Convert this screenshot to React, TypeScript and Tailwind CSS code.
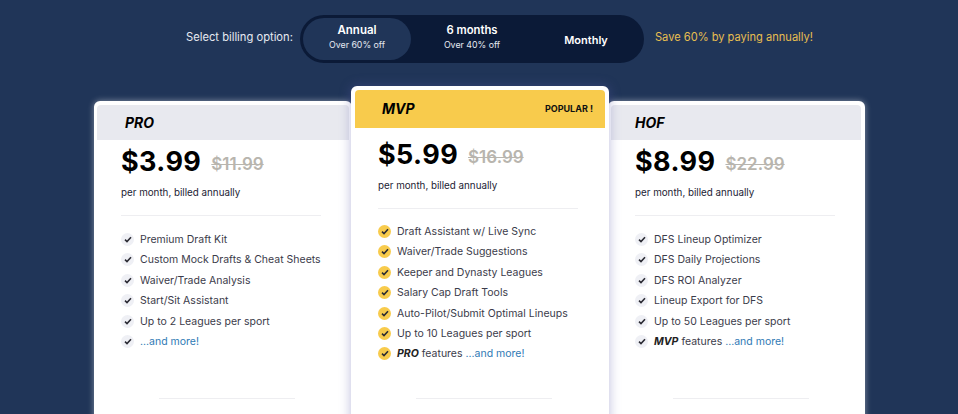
import React from "react";

const Check = ({ popular }: { popular?: boolean }) => (
  <span className={`flex h-[13px] w-[13px] shrink-0 items-center justify-center rounded-full ${popular ? "bg-[#f8cb4c]" : "bg-[#eff0f5]"}`}>
    <svg width="8" height="7" viewBox="0 0 8 7" fill="none">
      <path d="M1 3.6 L3 5.5 L7 1.3" stroke="#2a2a33" strokeWidth="1.6" />
    </svg>
  </span>
);

const More = () => <span className="text-[#2f7ab5]">...and more!</span>;

type Plan = {
  name: string;
  price: string;
  old: string;
  features: React.ReactNode[];
  popular?: boolean;
  last?: boolean;
};

const plans: Plan[] = [
  {
    name: "PRO",
    price: "$3.99",
    old: "$11.99",
    features: ["Premium Draft Kit", "Custom Mock Drafts & Cheat Sheets", "Waiver/Trade Analysis", "Start/Sit Assistant", "Up to 2 Leagues per sport", <More />],
  },
  {
    name: "MVP",
    price: "$5.99",
    old: "$16.99",
    popular: true,
    features: [
      "Draft Assistant w/ Live Sync",
      "Waiver/Trade Suggestions",
      "Keeper and Dynasty Leagues",
      "Salary Cap Draft Tools",
      "Auto-Pilot/Submit Optimal Lineups",
      "Up to 10 Leagues per sport",
      <><b className="font-bold italic text-[#222]">PRO</b> features <More /></>,
    ],
  },
  {
    name: "HOF",
    price: "$8.99",
    old: "$22.99",
    last: true,
    features: [
      "DFS Lineup Optimizer",
      "DFS Daily Projections",
      "DFS ROI Analyzer",
      "Lineup Export for DFS",
      "Up to 50 Leagues per sport",
      <><b className="font-bold italic text-[#222]">MVP</b> features <More /></>,
    ],
  },
];

function Card({ plan }: { plan: Plan }) {
  const p = plan.popular;
  const l = plan.last;
  return (
    <div
      className={`flex h-[340px] shrink-0 flex-col rounded-t-[6px] border-[3px] border-white bg-white ${
        p
          ? "z-10 -mx-[1px] -mt-[15px] w-[258px] border-[4px] shadow-[0_0_12px_rgba(90,90,170,0.4)]"
          : l
            ? "w-[257px] border-r-[4px] shadow-[0_0_6px_rgba(255,255,255,0.45)]"
            : "w-[258px] shadow-[0_0_6px_rgba(255,255,255,0.45)]"
      }`}
    >
      <div
        className={`flex shrink-0 items-center justify-between rounded-t-[4px] ${
          p ? "h-[38px] bg-[#f8cb4c] pl-[27px] pr-[12px]" : l ? "mt-[1px] h-[35px] bg-[#e8e9ef] pl-[24px] pr-2" : "mt-[1px] h-[35px] bg-[#e8e9ef] pl-[28px] pr-2"
        }`}
      >
        <span className="text-[14px] font-bold italic leading-none text-black">{plan.name}</span>
        {p && <span className="-mt-[2px] text-[9px] font-bold leading-none text-[#111]">POPULAR !</span>}
      </div>
      <div className={`flex flex-1 flex-col ${p ? "pl-[23px] pr-[27px]" : "pl-[24px] pr-[10px]"}`}>
        <div className={`flex items-center gap-[10px] ${p ? "mt-[8px]" : "mt-[3px]"}`}>
          <span className="text-[27px] font-bold leading-[38px] tracking-[0.4px] text-black">{plan.price}</span>
          <span className="mt-[4px] text-[17px] font-semibold leading-[24px] text-[#b8b5ae] line-through">{plan.old}</span>
        </div>
        <div className="mt-[5px] text-[9.8px] leading-[14px] text-[#222233]">per month, billed annually</div>
        <div className="mt-[15px] h-px w-[200px] bg-[#eeeef1]" />
        <ul className={`flex flex-col gap-[5.4px] ${p ? "mt-[15px]" : "mt-[16px]"}`}>
          {plan.features.map((f, i) => (
            <li key={i} className="flex h-[15px] items-center gap-[6px] whitespace-nowrap text-[10.5px] leading-[15px] text-[#3b3b4a]">
              <Check popular={p} />
              <span>{f}</span>
            </li>
          ))}
        </ul>
        <div className={`ml-[38px] h-px w-[136px] bg-[#eeeef1] ${p ? "mt-[37px]" : "mt-[49px]"}`} />
      </div>
    </div>
  );
}

export default function App() {
  return (
    <div className="h-[414px] w-[958px] overflow-hidden bg-[#203558] font-['Inter',sans-serif]">
      <div className="flex h-[78px] items-start pl-[186px] pt-[15px]">
        <span className="mt-[15px] w-[114px] shrink-0 text-[11.2px] leading-[15px] text-[#e6eaf2]">Select billing option:</span>
        <div className="flex h-[48px] w-[344px] shrink-0 items-center rounded-full bg-[#0b1a37] pl-[3px]">
          <div className="flex h-[42px] w-[108px] flex-col items-center justify-center rounded-full bg-[#203558] pb-[6px]">
            <span className="text-[11.5px] font-semibold leading-[16px] text-white">Annual</span>
            <span className="text-[8.8px] leading-[13px] text-[#e6eaf2]">Over 60% off</span>
          </div>
          <div className="flex h-[42px] w-[122px] flex-col items-center justify-center pb-[6px]">
            <span className="text-[11.3px] font-semibold leading-[16px] text-white">6 months</span>
            <span className="text-[8.8px] leading-[13px] text-[#e6eaf2]">Over 40% off</span>
          </div>
          <div className="flex h-[42px] w-[106px] items-center justify-center">
            <span className="mt-[1px] text-[11px] font-semibold leading-[16px] text-white">Monthly</span>
          </div>
        </div>
        <span className="ml-[11px] mt-[15px] text-[11.1px] leading-[15px] text-[#e8bf50]">Save 60% by paying annually!</span>
      </div>
      <div className="flex pl-[94px] pt-[23px]">
        {plans.map((pl) => (
          <Card key={pl.name} plan={pl} />
        ))}
      </div>
    </div>
  );
}
